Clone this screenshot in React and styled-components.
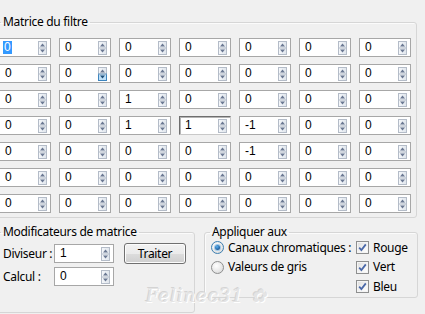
import React from 'react';
import styled, { createGlobalStyle, css } from 'styled-components';

const Global = createGlobalStyle`
  html, body { margin: 0; padding: 0; background: #f0f0f0; }
  body {
    width: 425px; height: 314px; overflow: hidden;
    font-family: "Noto Sans", "Open Sans", sans-serif;
    font-size: 12px; letter-spacing: -0.3px; color: #000;
  }
`;

const Page = styled.div`
  position: relative;
  width: 425px;
  height: 314px;
  overflow: hidden;
  box-sizing: border-box;
  padding-top: 14px;
  display: flex;
  flex-direction: column;
`;

const Group = styled.fieldset`
  margin: 0;
  min-width: 0;
  box-sizing: border-box;
  border: 1px solid #d6d6d6;
  border-radius: 3px;
  box-shadow: inset 1px 1px 0 #fbfbfb;
`;

const MatrixGroup = styled(Group)`
  margin-left: -7px;
  width: 424px;
  padding: 8px 5px 4px 5px;
`;

const Legend = styled.legend`
  padding: 0 2px;
  margin-left: ${p => p.$ml ?? 2}px;
  font-size: 12px;
  line-height: 16px;
  white-space: nowrap;
`;

const Grid = styled.div`
  display: grid;
  grid-template-columns: repeat(7, 52px);
  column-gap: 8px;
  row-gap: 7px;
`;

const Field = styled.div`
  display: flex;
  align-items: center;
  box-sizing: border-box;
  width: ${p => p.$w || 52}px;
  height: 19px;
  background: #fff;
  border: 1px solid #a7a7a7;
  ${p => p.$focused && css`
    border-color: #6e6e6e #c9c9c9 #c9c9c9 #6e6e6e;
    box-shadow: inset 1px 1px 0 #b5b5b5;
  `}
`;

const Value = styled.span`
  flex: 1;
  padding-left: ${p => p.$sel ? 3 : 5}px;
  font-family: "Liberation Sans", Arial, sans-serif;
  font-size: 12px;
  letter-spacing: 0;
  line-height: 13px;
  color: #000;
  ${p => p.$sel && css`
    & > b { font-weight: normal; background: #3399ff; color: #fff; padding: 0 1px; display: inline-block; height: 13px; }
  `}
`;

const SpinWrap = styled.span`
  display: block;
  width: 9px;
  height: 14px;
  margin-right: 3px;
`;

function Spinner({ hotDown }) {
  return (
    <SpinWrap>
      <svg width="9" height="14" viewBox="0 0 9 14">
        <defs>
          <linearGradient id="sg" x1="0" y1="0" x2="1" y2="0">
            <stop offset="0" stopColor="#f6f8fb" />
            <stop offset="1" stopColor="#dfe5ec" />
          </linearGradient>
        </defs>
        <rect x="0.5" y="0.5" width="8" height="13" fill="url(#sg)" stroke="#b4bcc8" />
        {hotDown && <rect x="0.5" y="7" width="8" height="6.5" fill="#bfe0f8" stroke="#3d85bf" />}
        <line x1="0.5" y1="7" x2="8.5" y2="7" stroke="#b4bcc8" />
        <polygon points="2,5.5 4.5,2.5 7,5.5" fill="#6a7892" />
        <polygon points="2,8.5 4.5,11.5 7,8.5" fill={hotDown ? '#1f4f7a' : '#6a7892'} />
      </svg>
    </SpinWrap>
  );
}

function SpinBox({ value, w, focused, selected, hotDown }) {
  return (
    <Field $w={w} $focused={focused}>
      <Value $sel={selected}>{selected ? <b>{value}</b> : value}</Value>
      <Spinner hotDown={hotDown} />
    </Field>
  );
}

const BottomRow = styled.div`
  display: flex;
  align-items: flex-start;
  gap: 9px;
  margin-top: 6px;
`;

const ModGroup = styled(Group)`
  margin-left: -7px;
  width: 202px;
  padding: 3px 5px 26px 9px;
`;

const ModGrid = styled.div`
  display: grid;
  grid-template-columns: 41px 60px 62px;
  column-gap: 10px;
  row-gap: 3px;
  align-items: center;
`;

const Label = styled.span`
  font-size: 12px;
  line-height: 16px;
  white-space: nowrap;
`;

const Button = styled.button`
  box-sizing: border-box;
  width: 62px;
  height: 21px;
  padding: 0;
  font-family: inherit;
  font-size: 12px;
  letter-spacing: inherit;
  color: #000;
  border: 1px solid #707070;
  border-radius: 3px;
  background: linear-gradient(#f2f2f2 0%, #ebebeb 50%, #dddddd 51%, #cfcfcf 100%);
  box-shadow: inset 0 0 0 1px #fcfcfc;
`;

const ApplyGroup = styled(Group)`
  width: 214px;
  margin-top: 0;
  padding: 0 6px 1px 6px;
`;

const ApplyGrid = styled.div`
  display: grid;
  grid-template-columns: 145px 1fr;
  grid-template-rows: 19px 20px 19px;
  align-items: center;
  margin-top: -2px;
`;

const Option = styled.label`
  display: flex;
  align-items: center;
  gap: 4px;
  font-size: 12px;
  line-height: 16px;
  white-space: nowrap;
  grid-column: ${p => p.$col || 'auto'};
`;

const Radio = styled.span`
  box-sizing: border-box;
  width: 13px;
  height: 13px;
  border-radius: 50%;
  border: 1px solid #8e8f8f;
  background: radial-gradient(circle at 40% 35%, #ffffff 0%, #e6e6e6 60%, #cfcfcf 100%);
  display: flex;
  align-items: center;
  justify-content: center;
  ${p => p.$on && css`
    border-color: #3c7fb1;
    &::after {
      content: '';
      width: 5px; height: 5px; border-radius: 50%;
      background: radial-gradient(circle at 40% 35%, #5ab0f0 0%, #1a5b9a 70%, #0d3d6b 100%);
      box-shadow: 0 0 0 1px #9fc9ea;
    }
  `}
`;

const Check = styled.span`
  box-sizing: border-box;
  width: 13px;
  height: 13px;
  border: 1px solid #8e8f8f;
  background: linear-gradient(135deg, #dcdcdc 0%, #f5f5f5 60%, #ffffff 100%);
  box-shadow: inset 0 0 0 1px #f4f4f4;
  display: flex;
  align-items: center;
  justify-content: center;
`;

function CheckMark() {
  return (
    <svg width="9" height="9" viewBox="0 0 9 9">
      <path d="M1.2 4.6 L3.4 7 L7.8 1.4" fill="none" stroke="#4a68a8" strokeWidth="1.8" />
    </svg>
  );
}

const Watermark = styled.span`
  position: absolute;
  left: 146px;
  top: 285px;
  font-family: "DejaVu Serif", serif;
  font-style: italic;
  font-size: 18px;
  letter-spacing: 1px;
  color: #e4e4e4;
  text-shadow: 1px 1px 0 #ffffff, -1px -1px 0 #d4d4d4;
  pointer-events: none;
  white-space: nowrap;
`;

const matrix = [
  [0, 0, 0, 0, 0, 0, 0],
  [0, 0, 0, 0, 0, 0, 0],
  [0, 0, 1, 0, 0, 0, 0],
  [0, 0, 1, 1, -1, 0, 0],
  [0, 0, 0, 0, -1, 0, 0],
  [0, 0, 0, 0, 0, 0, 0],
  [0, 0, 0, 0, 0, 0, 0],
];

export default function App() {
  return (
    <>
      <Global />
      <Page>
        <MatrixGroup>
          <Legend>Matrice du filtre</Legend>
          <Grid>
            {matrix.map((row, r) =>
              row.map((v, c) => (
                <SpinBox
                  key={`${r}-${c}`}
                  value={v}
                  selected={r === 0 && c === 0}
                  hotDown={r === 1 && c === 1}
                  focused={r === 3 && c === 3}
                />
              ))
            )}
          </Grid>
        </MatrixGroup>
        <BottomRow>
          <ModGroup>
            <Legend $ml={-2}>Modificateurs de matrice</Legend>
            <ModGrid>
              <Label>Diviseur :</Label>
              <SpinBox value={1} w={60} />
              <Button>Traiter</Button>
              <Label>Calcul :</Label>
              <SpinBox value={0} w={60} />
            </ModGrid>
          </ModGroup>
          <ApplyGroup>
            <Legend $ml={-1}>Appliquer aux</Legend>
            <ApplyGrid>
              <Option><Radio $on />Canaux chromatiques :</Option>
              <Option><Check><CheckMark /></Check>Rouge</Option>
              <Option><Radio />Valeurs de gris</Option>
              <Option><Check><CheckMark /></Check>Vert</Option>
              <Option $col="2"><Check><CheckMark /></Check>Bleu</Option>
            </ApplyGrid>
          </ApplyGroup>
        </BottomRow>
        <Watermark>Felinec31 ✿</Watermark>
      </Page>
    </>
  );
}
